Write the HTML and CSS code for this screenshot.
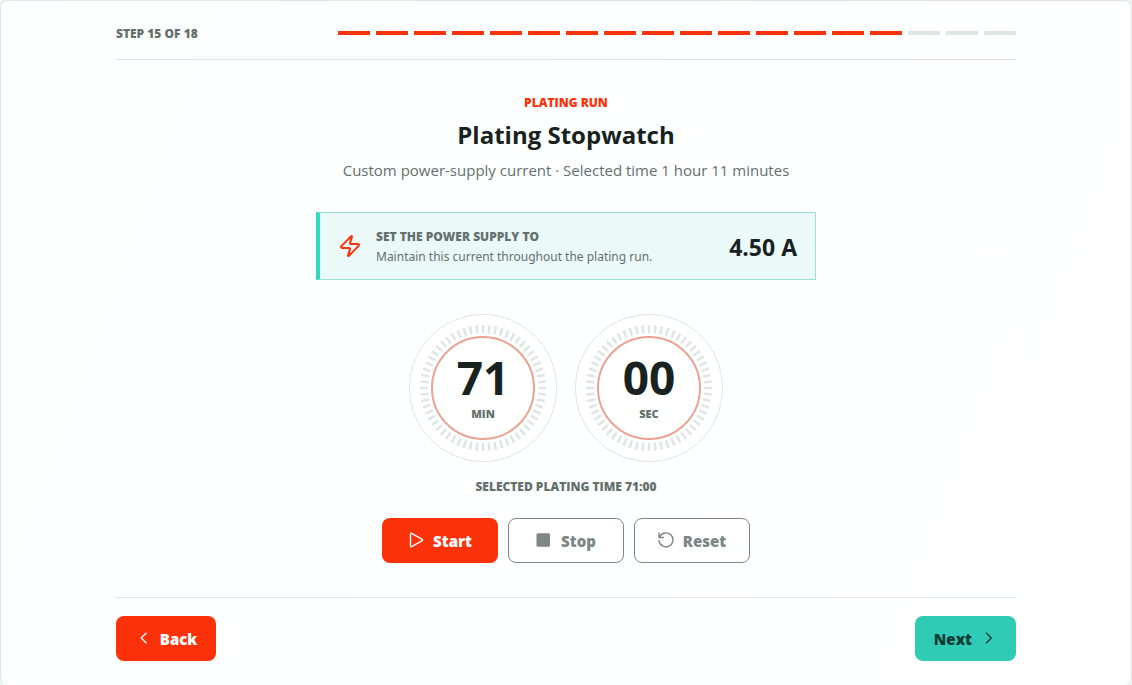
FILE: index.html
```html
<!DOCTYPE html>
<html lang="en">
<head>
<meta charset="utf-8">
<meta name="viewport" content="width=device-width, initial-scale=1">
<title>Plating Stopwatch</title>
<link rel="stylesheet" href="styles.css">
</head>
<body>
<div class="panel">
  <div class="content">
    <header class="steps">
      <span class="steps-label">STEP 15 OF 18</span>
      <div class="steps-track" role="progressbar" aria-label="Step" aria-valuemin="1" aria-valuenow="15" aria-valuemax="18">
        <i class="done"></i><i class="done"></i><i class="done"></i><i class="done"></i><i class="done"></i><i class="done"></i><i class="done"></i><i class="done"></i><i class="done"></i><i class="done"></i><i class="done"></i><i class="done"></i><i class="done"></i><i class="done"></i><i class="done"></i><i></i><i></i><i></i>
      </div>
    </header>
    <main class="main">
      <p class="eyebrow">PLATING RUN</p>
      <h1 class="title">Plating Stopwatch</h1>
      <p class="subtitle">Custom power-supply current · Selected time 1 hour 11 minutes</p>
      <section class="supply">
        <svg class="supply-icon" viewBox="0 0 24 24" aria-hidden="true"><path d="M4 14a1 1 0 0 1-.78-1.63l9.900-10.200a.5.5 0 0 1 .86.46l-1.920 6.020A1 1 0 0 0 13 10h7a1 1 0 0 1 .78 1.630l-9.900 10.200a.5.5 0 0 1-.86-.46l1.920-6.020A1 1 0 0 0 11 14z"/></svg>
        <div class="supply-text">
          <h2 class="supply-title">SET THE POWER SUPPLY TO</h2>
          <p class="supply-note">Maintain this current throughout the plating run.</p>
        </div>
        <strong class="supply-value">4.50 A</strong>
      </section>
      <div class="dials" role="timer">
        <div class="dial">
          <svg class="dial-face" viewBox="0 0 148 148" aria-hidden="true"><circle class="rim" cx="74" cy="74" r="73.5"/><circle class="ticks" cx="74" cy="74" r="59" pathLength="360"/><circle class="ring" cx="74" cy="74" r="51"/></svg>
          <div class="dial-text"><span class="dial-number">71</span><span class="dial-unit">MIN</span></div>
        </div>
        <div class="dial">
          <svg class="dial-face" viewBox="0 0 148 148" aria-hidden="true"><circle class="rim" cx="74" cy="74" r="73.5"/><circle class="ticks" cx="74" cy="74" r="59" pathLength="360"/><circle class="ring" cx="74" cy="74" r="51"/></svg>
          <div class="dial-text"><span class="dial-number">00</span><span class="dial-unit">SEC</span></div>
        </div>
      </div>
      <p class="selected">SELECTED PLATING TIME 71:00</p>
      <div class="controls">
        <button class="btn btn-red" type="button"><svg class="icon" viewBox="0 0 16 16" aria-hidden="true"><path d="M2.500 2.100v11.800c0 .6.6 1 1.200.7L14.200 8.700a.8.8 0 0 0 0-1.400L3.700 1.400C3.100 1.100 2.500 1.500 2.500 2.100z"/></svg>Start</button>
        <button class="btn btn-line" type="button"><svg class="icon" viewBox="0 0 16 16" aria-hidden="true"><rect class="solid" x="0.500" y="1.200" width="13.500" height="13.500" rx="1.500"/></svg>Stop</button>
        <button class="btn btn-line" type="button"><svg class="icon" viewBox="0 0 16 16" aria-hidden="true"><path d="M1 1v4.500h4.500M1.500 5.200A7 7 0 1 1 1 8.500"/></svg>Reset</button>
      </div>
    </main>
    <footer class="footer">
      <button class="btn btn-red btn-nav" type="button"><svg class="icon" viewBox="0 0 16 16" aria-hidden="true"><path d="M11 3.200 6.200 8l4.800 4.800"/></svg>Back</button>
      <button class="btn btn-teal btn-nav" type="button">Next<svg class="icon" viewBox="0 0 16 16" aria-hidden="true"><path d="M5.500 3.200 10.300 8l-4.800 4.800"/></svg></button>
    </footer>
  </div>
</div>
</body>
</html>
```
FILE: styles.css
```css
* { box-sizing: border-box; }
body {
  margin: 0;
  background: linear-gradient(110deg, #e8f7f5, #f2f4f3);
  color: #182321;
  font-family: "Segoe UI", "Open Sans", sans-serif;
}
h1, h2, p { margin: 0; }
.panel {
  min-height: 100vh;
  padding: 0 24px;
  border: 1px solid #dee6e3;
  border-bottom: 0;
  border-radius: 8px;
  background: linear-gradient(110deg, #fdffff, #fff);
}
.content { max-width: 900px; margin: 0 auto; }
.steps {
  display: flex;
  align-items: center;
  justify-content: space-between;
  gap: 24px;
  height: 59px;
  padding-top: 6px;
  border-bottom: 1px solid #dee6e3;
}
.steps-label { color: #64706d; font-size: 12px; font-weight: 800; line-height: 15px; }
.steps-track {
  display: grid;
  grid-template-columns: repeat(18, 1fr);
  gap: 6px;
  width: 678px;
}
.steps-track i { height: 4px; background: #dee6e3; }
.steps-track .done { background: #fb3109; }
.main {
  display: flex;
  flex-direction: column;
  align-items: center;
  padding: 34px 0;
  text-align: center;
}
.eyebrow { color: #fb3109; font-size: 12px; font-weight: 800; line-height: 18px; }
.title { margin-top: 6px; font-size: 24px; font-weight: 700; line-height: 34px; }
.subtitle { margin-top: 6px; color: #64706d; font-size: 15px; line-height: 24px; }
.supply {
  display: flex;
  align-items: center;
  gap: 14px;
  width: 100%;
  max-width: 500px;
  margin-top: 30px;
  padding: 14px 18px 12px;
  border: 1px solid #9be0d6;
  border-left: 4px solid #2edbbf;
  background: #ebf9f9;
  text-align: left;
}
.supply-icon { width: 24px; height: 24px; margin-bottom: 2px; fill: none; stroke: #fb3109; stroke-width: 2; stroke-linejoin: round; }
.supply-text { flex: 1; }
.supply-title { color: #64706d; font-size: 12px; font-weight: 800; line-height: 20px; }
.supply-note { color: #64706d; font-family: "Segoe UI", "Noto Sans", sans-serif; font-size: 12px; line-height: 20px; }
.supply-value { font-size: 23px; font-weight: 700; line-height: 32px; }
.dials { display: flex; flex-wrap: wrap; justify-content: center; gap: 18px; margin-top: 34px; }
.dial { display: grid; width: 148px; height: 148px; }
.dial-face, .dial-text { grid-area: 1 / 1; }
.dial-face { width: 148px; height: 148px; fill: none; }
.rim { stroke: #dee6e3; stroke-width: 1; fill: #fff; }
.ticks { stroke: #dee6e3; stroke-width: 8; stroke-dasharray: 2.400 3.600; stroke-dashoffset: 1.200; }
.ring { stroke: #eaa292; stroke-width: 2; }
.dial-text { display: flex; flex-direction: column; align-items: center; padding-top: 37px; }
.dial-number { font-size: 46px; font-weight: 700; line-height: 52px; }
.dial-unit { color: #64706d; font-size: 11px; font-weight: 800; line-height: 22px; }
.selected { margin-top: 16px; color: #64706d; font-size: 12px; font-weight: 800; line-height: 18px; }
.controls { display: flex; flex-wrap: wrap; justify-content: center; gap: 10px; margin-top: 22px; }
.btn {
  display: inline-flex;
  align-items: center;
  justify-content: center;
  gap: 9px;
  min-width: 116px;
  height: 45px;
  padding: 0 17px;
  border: 1px solid transparent;
  border-radius: 8px;
  font: 800 15px/24px "Segoe UI", "Open Sans", sans-serif;
}
.btn .icon { width: 16px; height: 16px; margin-bottom: 2px; fill: none; stroke: currentColor; stroke-width: 1.4; stroke-linejoin: round; stroke-linecap: round; }
.btn .solid { fill: currentColor; stroke: none; }
.btn-red { background: #fa3109; color: #fff; }
.btn-line { border-color: #7d8785; background: #fff; color: #7d8785; }
.btn-nav { min-width: 100px; }
.btn-teal { padding: 0 18px; background: #2fcbb5; color: #0b3a34; }
.footer {
  display: flex;
  justify-content: space-between;
  padding: 18px 0 23px;
  border-top: 1px solid #dee6e3;
}
```
